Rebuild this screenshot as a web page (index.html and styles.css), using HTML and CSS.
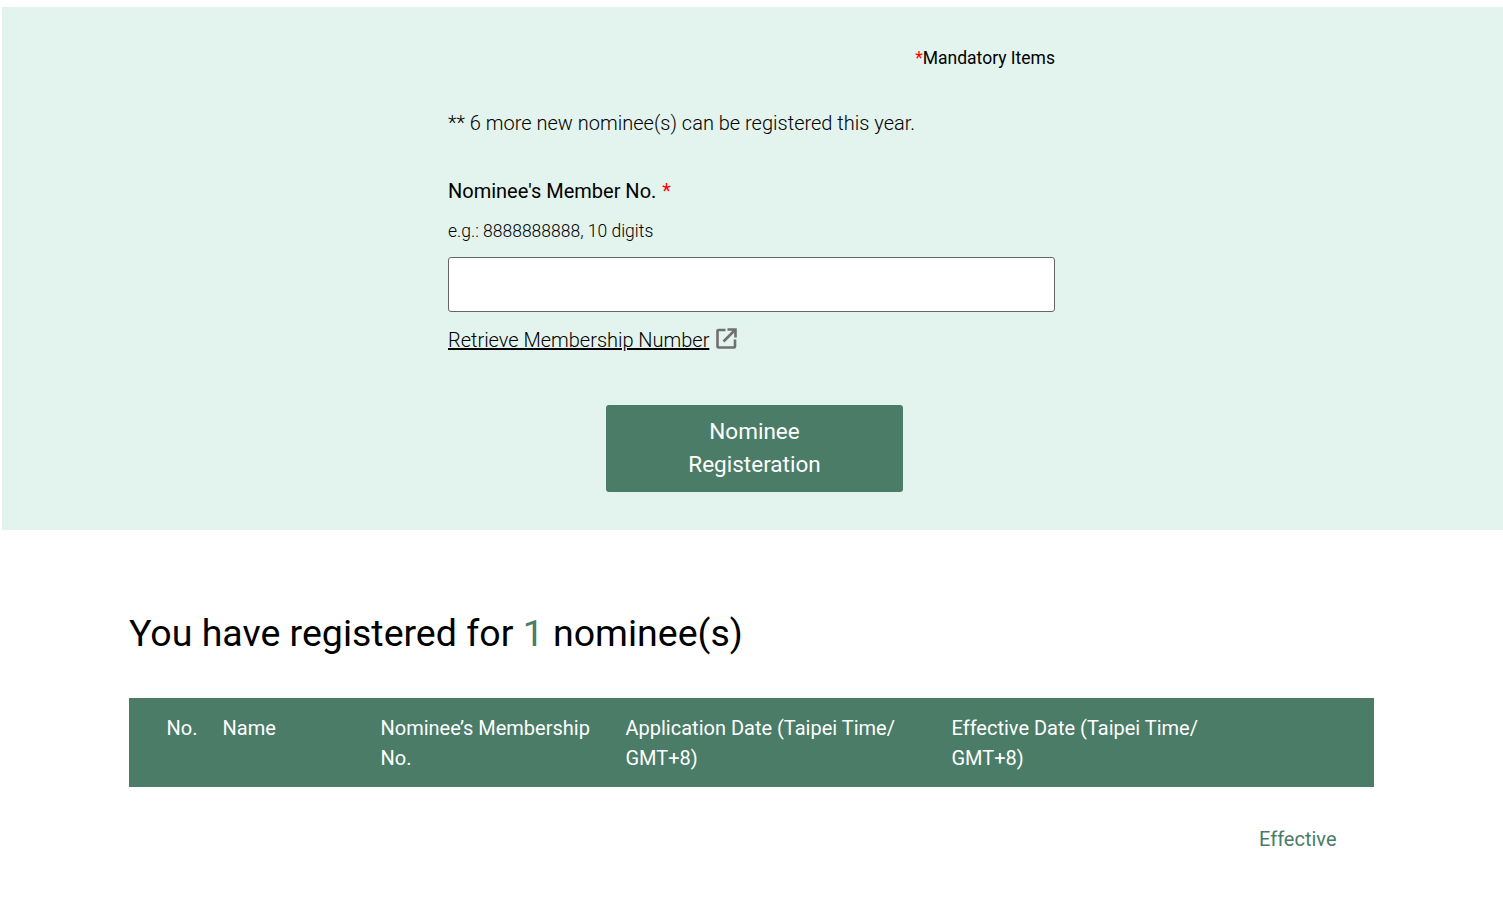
FILE: index.html
```html
<!DOCTYPE html>
<html lang="en">
<head>
<meta charset="utf-8">
<title>Nominee Registration</title>
<link rel="stylesheet" href="styles.css">
</head>
<body>
<section class="panel">
  <form class="form">
    <p class="mandatory"><span class="req">*</span>Mandatory Items</p>
    <p class="quota">** 6 more new nominee(s) can be registered this year.</p>
    <label class="label" for="member">Nominee's Member No. <span class="req req-gap">*</span></label>
    <p class="hint">e.g.: 8888888888, 10 digits</p>
    <input class="input" id="member" type="text">
    <p class="retrieve">
      <a class="link" href="#">Retrieve Membership Number</a>
      <svg class="ext" viewBox="0 0 21 21" width="21" height="21" aria-hidden="true">
        <path d="M9.500 2H2.500a1 1 0 0 0-1 1v15.500a1 1 0 0 0 1 1H18a1 1 0 0 0 1-1V11.500" fill="none" stroke="#6f6f6f" stroke-width="2.600"/>
        <path d="M7.500 13.500 18.500 2.500M11.500 1.500h8v8" fill="none" stroke="#6f6f6f" stroke-width="2.600"/>
      </svg>
    </p>
    <div class="actions"><button class="submit" type="button">Nominee<br>Registeration</button></div>
  </form>
</section>
<section class="results">
  <h2 class="title">You have registered for <span class="count">1</span> nominee(s)</h2>
  <div class="table">
    <div class="row head">
      <div>No.</div>
      <div>Name</div>
      <div>Nominee’s Membership No.</div>
      <div>Application Date (Taipei Time/ GMT+8)</div>
      <div>Effective Date (Taipei Time/ GMT+8)</div>
      <div></div>
    </div>
    <div class="row body">
      <div></div><div></div><div></div><div></div><div></div>
      <div class="status">Effective</div>
    </div>
  </div>
</section>
</body>
</html>
```
FILE: styles.css
```css
* { box-sizing: border-box; }
html, body { margin: 0; padding: 0; }
body {
  font-family: Roboto, "Liberation Sans", sans-serif;
  color: #000;
  background: #fff;
  height: 912px;
  overflow: hidden;
  padding-top: 7px;
}
p { margin: 0; }
.panel {
  margin-left: 2px;
  height: 523px;
  background: #e3f3ed;
  padding-top: 39px;
}
.form {
  width: 607px;
  margin-left: 446px;
  display: flex;
  flex-direction: column;
}
.req { color: #f00; }
.req-gap { margin-left: 1px; }
.mandatory {
  font-size: 17.5px;
  line-height: 24px;
  text-align: right;
  font-weight: 400;
}
.quota {
  margin-top: 38px;
  font-size: 20px;
  line-height: 30px;
  font-weight: 300;
}
.label {
  margin-top: 38px;
  font-size: 20px;
  line-height: 30px;
  font-weight: 400;
}
.hint {
  margin-top: 13px;
  font-size: 17.5px;
  line-height: 24px;
  font-weight: 300;
}
.input {
  margin-top: 14px;
  width: 607px;
  height: 55px;
  background: #fff;
  border: 1px solid #666;
  border-radius: 3px;
}
.retrieve {
  margin-top: 13px;
  display: flex;
  align-items: center;
  gap: 7px;
  height: 30px;
  font-size: 20px;
  font-weight: 300;
  letter-spacing: -0.02px;
}
.link { color: #000; text-decoration: underline; }
.ext { display: block; margin-top: -3px; }
.actions {
  margin-top: 50px;
  display: flex;
  justify-content: center;
}
.submit {
  width: 297px;
  height: 87px;
  margin-left: 6px;
  background: #4a7c68;
  color: #fff;
  border: 0;
  border-radius: 3px;
  font-family: inherit;
  font-size: 22.5px;
  line-height: 33px;
  font-weight: 400;
  padding: 0 0 2px;
}
.results {
  padding: 0 129px;
}
.title {
  margin: 77px 0 0;
  font-size: 37.5px;
  line-height: 52px;
  font-weight: 400;
}
.count { color: #4a7c68; }
.table { margin-top: 39px; width: 1245px; }
.row {
  display: grid;
  grid-template-columns: 56px 158px 245px 326px 280px 1fr;
  padding-left: 37.5px;
  font-size: 20px;
  line-height: 30px;
}
.row > div { padding-right: 20px; }
.head {
  background: #4a7c68;
  color: #fff;
  padding-top: 15px;
  padding-bottom: 14px;
}
.body {
  padding-top: 37px;
  color: #4a7c68;
}
.row > .status {
  padding-right: 37.5px;
  text-align: right;
}
```
